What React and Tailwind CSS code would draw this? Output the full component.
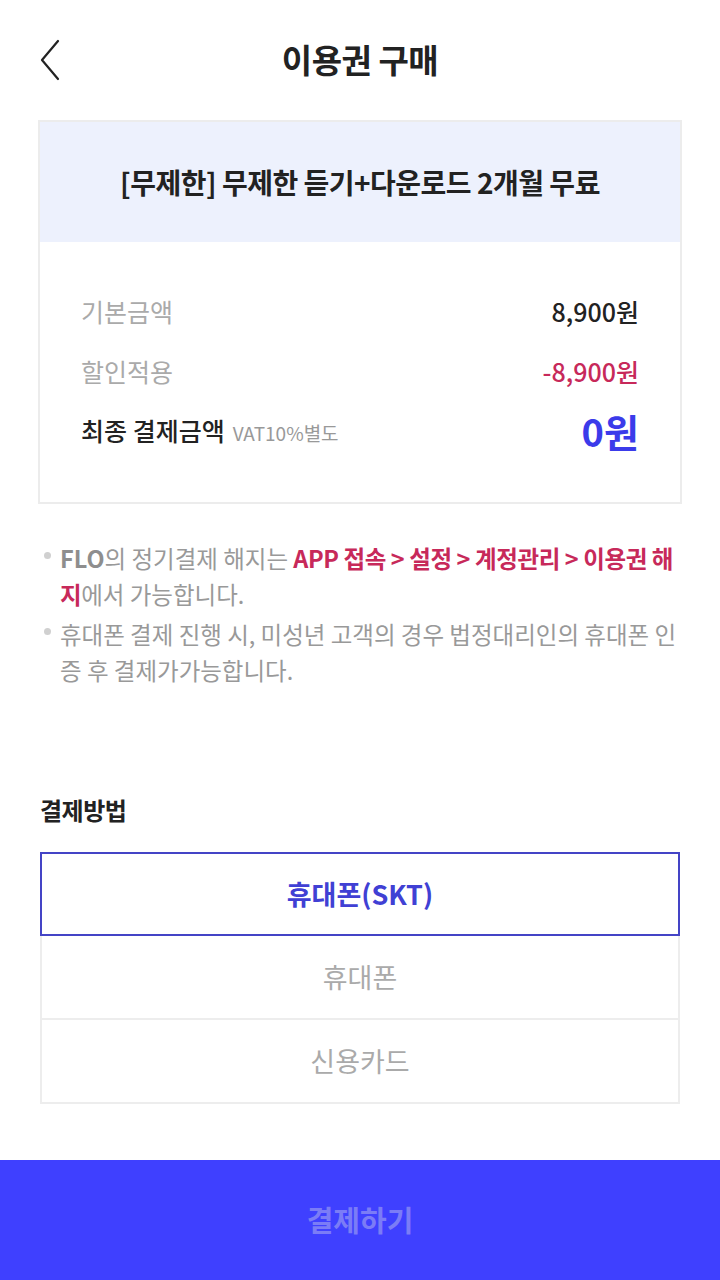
import React, { useState } from 'react';

const methods = ['휴대폰(SKT)', '휴대폰', '신용카드'];

const App = () => {
  const [selected, setSelected] = useState(0);

  return (
    <div
      className="w-[720px] h-[1280px] bg-white flex flex-col text-[#222]"
      style={{ fontFamily: '"Noto Sans CJK KR", "Noto Sans", sans-serif' }}
    >
      {/* Header */}
      <div className="relative h-[120px] flex items-center justify-center shrink-0">
        <button className="absolute left-[36px] top-[38px] w-[28px] h-[44px] flex items-center justify-center">
          <svg width="22" height="42" viewBox="0 0 22 42" fill="none">
            <path d="M19 2 L3 21 L19 40" stroke="#222" strokeWidth="2.2" strokeLinecap="round" strokeLinejoin="round" />
          </svg>
        </button>
        <h1 className="text-[33px] font-bold tracking-[-0.5px]">이용권 구매</h1>
      </div>

      {/* Product card */}
      <div className="mx-[38px] border-2 border-[#ececec]">
        <div className="h-[120px] bg-[#edf1fd] flex items-center justify-center">
          <span className="text-[28px] font-bold tracking-[-0.5px]">[무제한] 무제한 듣기+다운로드 2개월 무료</span>
        </div>
        <div className="px-[41px] pt-[50px] pb-[46px] flex flex-col">
          <div className="flex items-center justify-between h-[40px]">
            <span className="text-[25px] text-[#aaa]">기본금액</span>
            <span className="text-[25px] text-[#222] font-medium">8,900원</span>
          </div>
          <div className="flex items-center justify-between h-[40px] mt-[20px]">
            <span className="text-[25px] text-[#aaa]">할인적용</span>
            <span className="text-[25px] text-[#c7295a] font-medium">-8,900원</span>
          </div>
          <div className="flex items-center justify-between h-[50px] mt-[14px]">
            <span className="flex items-baseline gap-[8px]">
              <span className="text-[25px] font-medium text-[#222]">최종 결제금액</span>
              <span className="text-[19px] text-[#999]">VAT10%별도</span>
            </span>
            <span className="text-[38px] font-bold text-[#3b3bea] leading-none">0원</span>
          </div>
        </div>
      </div>

      {/* Notes */}
      <ul className="mx-[40px] mt-[36px] text-[23.5px] leading-[36px] text-[#999] flex flex-col gap-[4px] break-all">
        <li className="flex">
          <span className="w-[20px] shrink-0 flex pt-[12px]">
            <span className="w-[7px] h-[7px] rounded-full bg-[#d0d0d0] ml-[4px]" />
          </span>
          <p>
            <b className="font-semibold text-[#8e8e8e]">FLO</b>의 정기결제 해지는{' '}
            <b className="font-semibold tracking-[-0.4px] text-[#c7295a]">APP 접속 &gt; 설정 &gt; 계정관리 &gt; 이용권 해지</b>에서 가능합니다.
          </p>
        </li>
        <li className="flex">
          <span className="w-[20px] shrink-0 flex pt-[12px]">
            <span className="w-[7px] h-[7px] rounded-full bg-[#d0d0d0] ml-[4px]" />
          </span>
          <p>휴대폰 결제 진행 시, 미성년 고객의 경우 법정대리인의 휴대폰 인증 후 결제가가능합니다.</p>
        </li>
      </ul>

      {/* Payment method */}
      <h2 className="mx-[40px] mt-[104px] text-[24px] font-bold tracking-[-0.5px]">결제방법</h2>
      <div className="mx-[40px] mt-[24px] flex flex-col">
        {methods.map((m, i) => (
          <button
            key={m}
            onClick={() => setSelected(i)}
            className={
              i === selected
                ? 'h-[84px] border-2 border-[#4444c6] text-[#4040d4] font-bold text-[27px] flex items-center justify-center'
                : 'h-[84px] border-2 border-t-0 border-[#ededed] text-[#aaa] text-[27px] flex items-center justify-center'
            }
          >
            {m}
          </button>
        ))}
      </div>

      <div className="flex-1" />

      {/* Submit */}
      <button className="h-[120px] bg-[#3f40ff] text-[#7b7cf6] text-[29px] font-bold flex items-center justify-center shrink-0">
        결제하기
      </button>
    </div>
  );
};

export default App;
